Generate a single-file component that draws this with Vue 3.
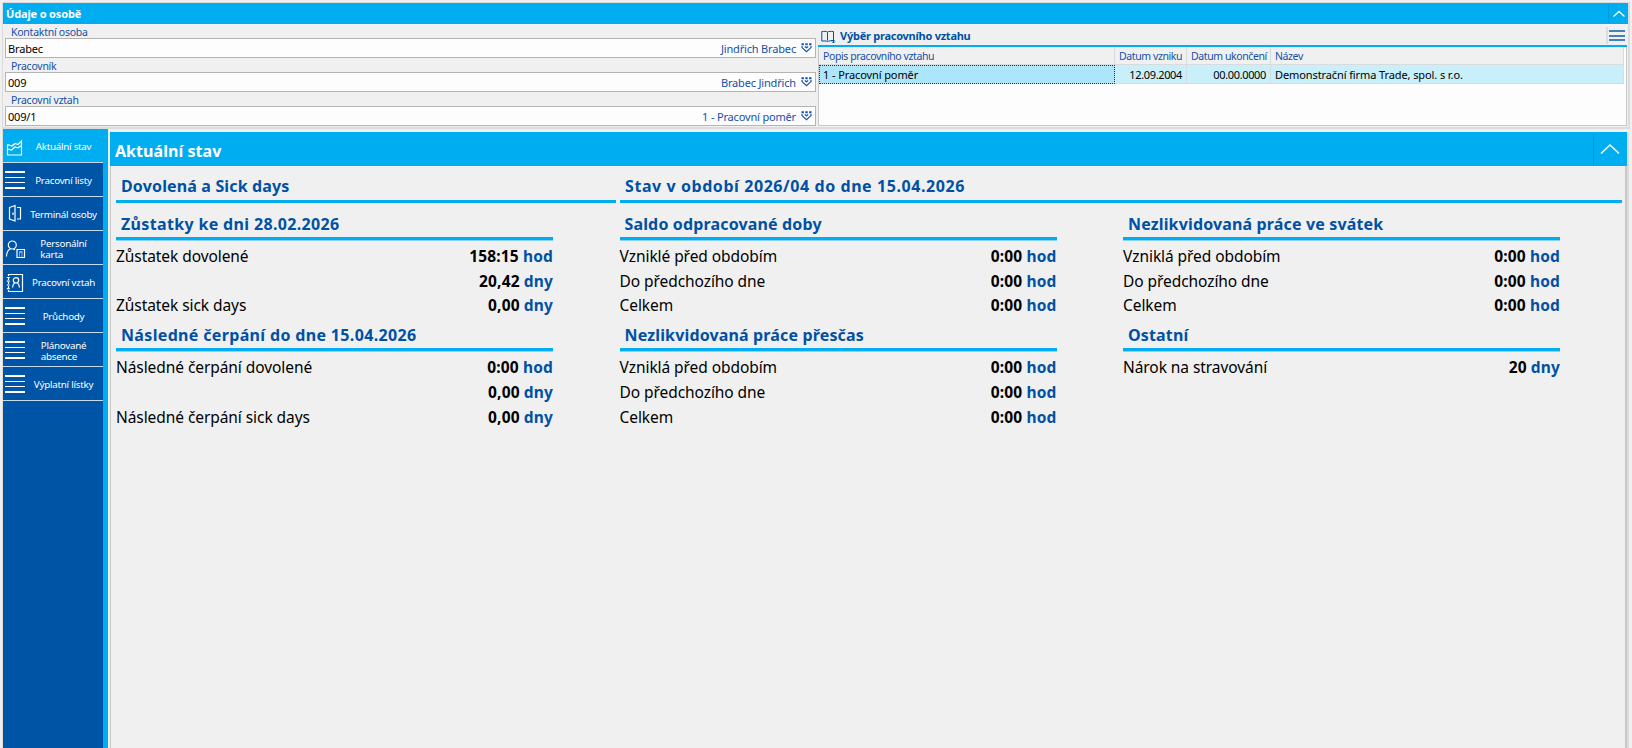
<template>
  <div class="app">
    <section class="person">
      <header class="person-header">
        <span class="person-title">Údaje o osobě</span>
        <button class="collapse" type="button">
          <svg width="14" height="8" viewBox="0 0 14 8"><path d="M1.5 6.5 7 1.5l5.500 5" /></svg>
        </button>
      </header>

      <div class="person-body">
        <div class="fields">
          <div v-for="field in fields" :key="field.label" class="field">
            <label>{{ field.label }}</label>
            <div class="field-input">
              <span>{{ field.value }}</span>
              <span class="field-hint">{{ field.hint }}</span>
              <svg class="field-icon" width="11" height="10" viewBox="0 0 11 10">
                <path d="M.5 1.200h2.400M4.300 1.200h2.400M8.100 1.200h2.400" stroke-width="2" />
                <path d="M1 3v1.600l4.500 4.200L10 4.600V3M3.800 3.500l1.700 1.300 1.700-1.300" stroke-width="1.200" />
              </svg>
            </div>
          </div>
        </div>

        <div class="relations">
          <div class="relations-title">
            <svg class="book" width="15" height="14" viewBox="0 0 15 14">
              <path d="M6.500 2.500v8M6.500 2C5 1.300 3 1.300.8 1.500v9.500h5l.8.800.8-.8h2.100M6.500 2c1.500-.7 3.500-.7 6-.5v7.500M9.500 10.500h4M12.500 8.500v4.500M11 11.500l1.500 1.500 1.500-1.500" />
            </svg>
            <span>Výběr pracovního vztahu</span>
            <button class="menu" type="button"><i></i><i></i><i></i></button>
          </div>
          <div class="grid">
            <div class="grid-row grid-head">
              <span>Popis pracovního vztahu</span>
              <span class="right">Datum vzniku</span>
              <span class="right">Datum ukončení</span>
              <span>Název</span>
            </div>
            <div class="grid-row grid-data">
              <span class="selected">1 - Pracovní poměr</span>
              <span class="right">12.09.2004</span>
              <span class="right">00.00.0000</span>
              <span>Demonstrační firma Trade, spol. s r.o.</span>
            </div>
          </div>
        </div>
      </div>
    </section>

    <div class="workspace">
      <nav class="sidebar">
        <a
          v-for="item in menu"
          :key="item.label"
          class="nav-item"
          :class="{ active: item.icon === 'chart' }"
        >
          <svg v-if="item.icon === 'chart'" class="nav-icon" width="22" height="21" viewBox="0 0 22 21">
            <path d="M3.500 9.500v10.500h14V6l-3.500 3.500-3-1-3 2.500-4.500-1.500M3.500 14l4 1 3.500-3 3 .8 3.500-2.300" />
          </svg>
          <svg v-else-if="item.icon === 'door'" class="nav-icon" width="22" height="21" viewBox="0 0 22 21">
            <path d="M5.500 4.500 11 2.500v15.500l-5.500-2zM13 4.500h3.500v11.500H13M9 9.500v2.500" />
          </svg>
          <svg v-else-if="item.icon === 'person'" class="nav-icon" width="22" height="21" viewBox="0 0 22 21">
            <circle cx="8.300" cy="8" r="4" />
            <path d="M2.500 19.500c0-4.500 1.500-6.500 4-7.800M9.500 11.700l1.500 1.300M13 12.500h7.500v8H13zM15 15h3.500M15 17h1M17.500 17h1M15 19h1M17.500 19h1" />
          </svg>
          <svg v-else-if="item.icon === 'card'" class="nav-icon" width="22" height="21" viewBox="0 0 22 21">
            <path d="M5 3.500h13.500v17H5" />
            <path d="M4.500 3v18" stroke-dasharray="2 2" />
            <path d="M2.800 6.500h3M2.800 10.200h3M2.800 14h3M2.800 17.700h3" />
            <circle cx="12" cy="9.300" r="2.700" />
            <path d="M8.500 16.500c.2-2.800 1-4 2.500-4.800M15.500 16.500c-.2-2.800-1-4-2.500-4.800" />
          </svg>
          <span v-else class="nav-lines"><i></i><i></i><i></i><i></i></span>
          <span class="nav-label">{{ item.label }}</span>
        </a>
      </nav>

      <main class="status">
        <header class="status-header">
          <h1>Aktuální stav</h1>
          <button class="collapse large" type="button">
            <svg width="20" height="12" viewBox="0 0 20 12"><path d="M1 10.500 10 2l9 8.500" /></svg>
          </button>
        </header>
        <div class="status-body">
          <div class="sections">
            <h2>Dovolená a Sick days</h2>
            <h2 class="period">Stav v období 2026/04 do dne 15.04.2026</h2>
          </div>
          <div class="groups">
            <section v-for="group in groups" :key="group.title" class="group">
              <h2 :class="{ dated: group.dated }">{{ group.title }}</h2>
              <div v-for="(row, i) in group.rows" :key="i" class="row">
                <span class="row-label">{{ row[0] }}</span>
                <span class="row-value">{{ row[1] }} <span class="unit">{{ row[2] }}</span></span>
              </div>
            </section>
          </div>
        </div>
      </main>
    </div>
  </div>
</template>

<script setup>
const fields = [
  { label: 'Kontaktní osoba', value: 'Brabec', hint: 'Jindřich Brabec' },
  { label: 'Pracovník', value: '009', hint: 'Brabec Jindřich' },
  { label: 'Pracovní vztah', value: '009/1', hint: '1 - Pracovní poměr' },
]

const menu = [
  { label: 'Aktuální stav', icon: 'chart' },
  { label: 'Pracovní listy', icon: 'lines' },
  { label: 'Terminál osoby', icon: 'door' },
  { label: 'Personální\nkarta', icon: 'person' },
  { label: 'Pracovní vztah', icon: 'card' },
  { label: 'Průchody', icon: 'lines' },
  { label: 'Plánované\nabsence', icon: 'lines' },
  { label: 'Výplatní lístky', icon: 'lines' },
]

const groups = [
  {
    title: 'Zůstatky ke dni 28.02.2026',
    dated: true,
    rows: [
      ['Zůstatek dovolené', '158:15', 'hod'],
      ['', '20,42', 'dny'],
      ['Zůstatek sick days', '0,00', 'dny'],
    ],
  },
  {
    title: 'Saldo odpracované doby',
    rows: [
      ['Vzniklé před obdobím', '0:00', 'hod'],
      ['Do předchozího dne', '0:00', 'hod'],
      ['Celkem', '0:00', 'hod'],
    ],
  },
  {
    title: 'Nezlikvidovaná práce ve svátek',
    rows: [
      ['Vzniklá před obdobím', '0:00', 'hod'],
      ['Do předchozího dne', '0:00', 'hod'],
      ['Celkem', '0:00', 'hod'],
    ],
  },
  {
    title: 'Následné čerpání do dne 15.04.2026',
    dated: true,
    rows: [
      ['Následné čerpání dovolené', '0:00', 'hod'],
      ['', '0,00', 'dny'],
      ['Následné čerpání sick days', '0,00', 'dny'],
    ],
  },
  {
    title: 'Nezlikvidovaná práce přesčas',
    rows: [
      ['Vzniklá před obdobím', '0:00', 'hod'],
      ['Do předchozího dne', '0:00', 'hod'],
      ['Celkem', '0:00', 'hod'],
    ],
  },
  {
    title: 'Ostatní',
    rows: [['Nárok na stravování', '20', 'dny']],
  },
]
</script>

<style>
body {
  background: #f0f0f0;
  overflow: hidden;
}
</style>

<style scoped>
.app {
  display: flex;
  flex-direction: column;
  box-sizing: border-box;
  width: 1632px;
  height: 748px;
  padding: 2px 2px 0;
  background: #f0f0f0;
  color: #000;
  font-family: 'Noto Sans', 'Open Sans', sans-serif;
  font-size: 11px;
  overflow: hidden;
}

svg {
  display: block;
  flex: none;
  fill: none;
  stroke: currentColor;
}

button {
  padding: 0;
  border: 0;
  background: none;
  color: inherit;
}

.person {
  box-sizing: border-box;
  height: 127px;
  border: 1px solid #dcdcdc;
  border-width: 1px 2px 2px 1px;
}

.person-header {
  display: flex;
  align-items: center;
  height: 21px;
  background: #00adf0;
  color: #fff;
}

.person-title {
  flex: 1;
  padding-left: 3px;
  font-weight: 700;
  letter-spacing: -0.15px;
}

.collapse {
  display: flex;
  align-items: center;
  justify-content: center;
  width: 20px;
  height: 18px;
  border-left: 1px solid #0098d8;
}

.collapse svg {
  stroke-width: 1.3;
}

.person-body {
  display: flex;
  height: 103px;
}

.fields {
  width: 811px;
  padding-left: 2px;
}

.field {
  height: 34px;
  color: #1450a8;
}

.field label {
  display: block;
  height: 14px;
  padding-left: 6px;
  font-size: 10.5px;
  letter-spacing: -0.25px;
  line-height: 16px;
}

.field-input {
  display: flex;
  align-items: center;
  box-sizing: border-box;
  height: 20px;
  padding: 0 3px 0 2px;
  border: 1px solid #b4b4b4;
  background: #fdfdfd;
  color: #000;
  letter-spacing: -0.17px;
}

.field-hint {
  margin-left: auto;
  color: #1450a8;
}

.field-icon {
  margin-left: 5px;
  color: #1450a8;
}

.relations {
  display: flex;
  flex: 1;
  flex-direction: column;
  margin: 0 1px 1px 2px;
}

.relations-title {
  display: flex;
  align-items: center;
  height: 20px;
  padding: 1px 0 0 3px;
  border-bottom: 2px solid #00adf0;
  color: #0050a5;
  font-weight: 700;
  letter-spacing: -0.25px;
}

.relations-title > span {
  padding-top: 1px;
}

.book {
  margin: 3px 4px 0 0;
}

.menu {
  display: flex;
  flex-direction: column;
  gap: 2.5px;
  margin: 1px 2px 0 auto;
  padding: 3px 0 3px 1px;
  border-left: 2px solid #dcdcdc;
}

.menu i {
  width: 16px;
  height: 2px;
  background: #4480c0;
}

.grid {
  flex: 1;
  border: 1px solid #c8c8c8;
  border-top: 0;
  background: #fdfdfd;
}

.grid-row {
  display: grid;
  grid-template-columns: 296px 72px 84px 1fr;
  box-sizing: border-box;
  margin-right: 2px;
  border-bottom: 1px solid #d8dcde;
}

.grid-row span {
  padding: 0 4px;
  border-right: 1px solid #d8dcde;
  white-space: nowrap;
}

.grid-head {
  height: 18px;
  background: #f0f0f0;
  color: #1450a8;
  font-size: 10.5px;
  letter-spacing: -0.4px;
  line-height: 18px;
}

.grid-data {
  height: 19px;
  background: #c9effb;
  letter-spacing: -0.1px;
  line-height: 19px;
}

.grid-row .right {
  text-align: right;
}

.grid-data .right {
  letter-spacing: -0.35px;
}

.grid-row .selected {
  padding-left: 3px;
  border: 1px dotted #333;
  background: #ade6fa;
  line-height: 17px;
}

.workspace {
  display: flex;
  flex: 1;
  min-height: 0;
}

.sidebar {
  box-sizing: border-box;
  width: 106px;
  margin-right: 2px;
  border-left: 1px solid #dcdcdc;
  border-right: 5px solid #00adf0;
  background: #0054a6;
}

.nav-item {
  display: flex;
  align-items: center;
  box-sizing: border-box;
  height: 34px;
  border-bottom: 1px solid #c8dcee;
  color: #fff;
  font-size: 9.8px;
  letter-spacing: -0.25px;
  line-height: 11px;
}

.nav-item.active {
  background: #00adf0;
}

.nav-icon {
  margin-left: 1px;
  stroke-width: 1.2;
}

.nav-lines {
  display: flex;
  flex: none;
  flex-direction: column;
  gap: 4px;
  width: 20px;
  margin: 1px 1px 0 2px;
}

.nav-lines i {
  height: 1.4px;
  background: #fff;
}

.nav-label {
  margin: 0 auto;
  padding: 2px 2px 0 0;
  white-space: pre;
}

.status {
  display: flex;
  flex: 1;
  flex-direction: column;
  margin: 3px 1px 0 0;
  border-right: 2px solid #dcdcdc;
}

.status-header {
  display: flex;
  align-items: center;
  height: 34px;
  padding-left: 5px;
  background: #00adf0;
  color: #fff;
}

.status-header h1 {
  flex: 1;
  margin: 0;
  padding-top: 3px;
  font-size: 16px;
  letter-spacing: 0.05px;
}

.collapse.large {
  width: 34px;
  height: 31px;
}

.collapse.large svg {
  margin-right: 2px;
  stroke-width: 1.6;
}

.status-body {
  flex: 1;
  padding: 8px 3px 0 5px;
  border-left: 1px solid #c8c8c8;
  border-right: 2px solid #c8c8c8;
}

h2 {
  box-sizing: border-box;
  height: 29px;
  margin: 0;
  padding-left: 5px;
  border-bottom: 3px solid #00adf0;
  color: #0050a5;
  font-size: 16px;
  letter-spacing: 0.15px;
  line-height: 26px;
  white-space: nowrap;
}

h2.dated {
  letter-spacing: 0.34px;
}

h2.period {
  letter-spacing: 0.57px;
}

.sections {
  display: grid;
  grid-template-columns: 500px 1fr;
  column-gap: 4px;
}

.sections h2 {
  line-height: 25px;
}

.groups {
  display: grid;
  grid-template-columns: repeat(3, 437px);
  column-gap: 66.5px;
  margin-top: 8px;
}

.group {
  height: 111.4px;
}

.group h2 {
  box-shadow: 0 1px 0 #8ad3f3;
}

.row {
  display: flex;
  justify-content: space-between;
  height: 24.7px;
  font-size: 15.5px;
  letter-spacing: -0.07px;
  line-height: 33px;
  white-space: nowrap;
}

.row-value {
  font-weight: 700;
  letter-spacing: 0.14px;
}

.unit {
  color: #0050a5;
}
</style>
